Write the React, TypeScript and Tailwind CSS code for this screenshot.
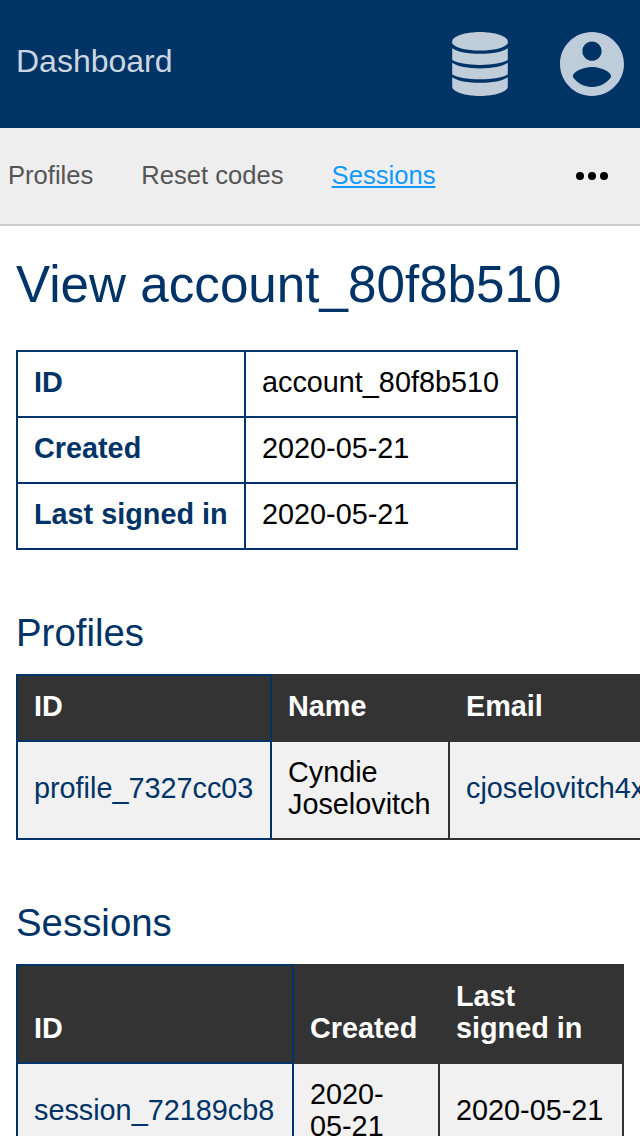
import type { ReactNode } from 'react';

function DatabaseIcon() {
  return (
    <svg viewBox="0 0 64 64" className="h-16 w-16" fill="currentColor" aria-hidden="true">
      <path d="M4.2 9.5C4.2 4.2 17 0 32 0s27.8 4.200 27.800 9.500V11.500C56.500 16 45.500 18.600 32 18.600S7.500 16 4.200 11.500Z" />
      <path d="M4.200 16.200C9.500 19.900 20 21.800 32 21.800s22.500-1.900 27.800-5.600V27.800C55.500 31 44.500 32.900 32 32.900S8.500 31 4.200 27.800Z" />
      <path d="M4.200 30.800C9.500 34.500 20 36.400 32 36.400s22.500-1.900 27.800-5.600V42.200C55.500 45.400 44.500 47.300 32 47.300S8.500 45.400 4.200 42.200Z" />
      <path d="M4.200 45.200C9.500 48.900 20 50.800 32 50.800s22.500-1.900 27.800-5.600V54.500C59.800 59.800 47 64 32 64S4.200 59.800 4.200 54.500Z" />
    </svg>
  );
}

function AccountIcon() {
  return (
    <svg viewBox="2 2 20 20" className="h-16 w-16" fill="currentColor" aria-hidden="true">
      <path d="M12 2C6.48 2 2 6.48 2 12s4.48 10 10 10 10-4.48 10-10S17.52 2 12 2zm0 3c1.66 0 3 1.34 3 3s-1.34 3-3 3-3-1.34-3-3 1.34-3 3-3zm0 14.2c-2.5 0-4.71-1.28-6-3.22.03-1.99 4-3.08 6-3.08 1.99 0 5.97 1.09 6 3.08-1.29 1.94-3.5 3.22-6 3.22z" />
    </svg>
  );
}

function MoreIcon() {
  return (
    <svg viewBox="0 0 32 8" className="h-2 w-8" fill="currentColor" aria-hidden="true">
      <circle cx="4" cy="4" r="4" />
      <circle cx="16" cy="4" r="4" />
      <circle cx="28" cy="4" r="4" />
    </svg>
  );
}

function HeadCell({ children, first = false }: { children: ReactNode; first?: boolean }) {
  return (
    <th
      className={
        first
          ? 'border-2 border-[#003366] bg-[#333333] px-4 pt-[14px] pb-[18px] text-left align-bottom font-bold text-white'
          : 'border-2 border-[#333333] bg-[#333333] px-4 pt-[14px] pb-[18px] text-left align-bottom font-bold text-white'
      }
    >
      {children}
    </th>
  );
}

function Cell({ children, first = false }: { children: ReactNode; first?: boolean }) {
  return (
    <td
      className={
        first
          ? 'border-2 border-[#003366] bg-[#f1f1f1] px-4 pt-[14px] pb-[18px] align-middle'
          : 'border-2 border-[#333333] bg-[#f1f1f1] px-4 pt-[14px] pb-[18px] align-middle'
      }
    >
      {children}
    </td>
  );
}

const details = [
  ['ID', 'account_80f8b510'],
  ['Created', '2020-05-21'],
  ['Last signed in', '2020-05-21'],
];

export default function App() {
  return (
    <div className="h-[1136px] w-[640px] overflow-hidden bg-white font-['Liberation_Sans',Arial,sans-serif] text-[28.8px] leading-8 text-black">
      <header className="flex h-32 items-center justify-between bg-[#003366] px-4 text-[#bfccd9]">
        <span className="pb-1.5 text-[32px] leading-9 text-[#ccd6e0]">Dashboard</span>
        <div className="flex gap-12">
          <DatabaseIcon />
          <AccountIcon />
        </div>
      </header>

      <nav className="flex h-[98px] items-center justify-between border-b-2 border-[#cccccc] bg-[#eeeeee] pr-8 pl-2 text-[25.6px]">
        <div className="flex gap-12 pb-0.5 text-[#555555]">
          <a>Profiles</a>
          <a>Reset codes</a>
          <a className="text-[#1199ff] underline decoration-2 underline-offset-2">Sessions</a>
        </div>
        <MoreIcon />
      </nav>

      <main className="px-4 pt-[29px]">
        <h1 className="text-[51.2px] leading-[60px] text-[#003366]">View account_80f8b510</h1>

        <table className="mt-[35px] w-[502px] table-fixed border-collapse">
          <colgroup>
            <col className="w-[228px]" />
            <col className="w-[272px]" />
          </colgroup>
          <tbody>
            {details.map(([label, value]) => (
              <tr key={label}>
                <th className="border-2 border-[#003366] px-4 pt-[14px] pb-[18px] text-left font-bold whitespace-nowrap text-[#003366]">{label}</th>
                <td className="border-2 border-[#003366] px-4 pt-[14px] pb-[18px]">{value}</td>
              </tr>
            ))}
          </tbody>
        </table>

        <h2 className="mt-[61px] text-[38.4px] leading-[44px] text-[#003366]">Profiles</h2>
        <div className="mt-[19px] -mr-4 overflow-hidden">
          <table className="w-[834px] table-fixed border-collapse">
            <colgroup>
              <col className="w-[254px]" />
              <col className="w-[178px]" />
              <col className="w-[400px]" />
            </colgroup>
            <thead>
              <tr>
                <HeadCell first>ID</HeadCell>
                <HeadCell>Name</HeadCell>
                <HeadCell>Email</HeadCell>
              </tr>
            </thead>
            <tbody>
              <tr>
                <Cell first><a className="text-[#003366]">profile_7327cc03</a></Cell>
                <Cell>Cyndie Joselovitch</Cell>
                <Cell><a className="text-[#003366]">cjoselovitch4x</a></Cell>
              </tr>
            </tbody>
          </table>
        </div>

        <h2 className="mt-[61px] text-[38.4px] leading-[44px] text-[#003366]">Sessions</h2>
        <table className="mt-[19px] w-[608px] table-fixed border-collapse">
          <colgroup>
            <col className="w-[276px]" />
            <col className="w-[146px]" />
            <col className="w-[184px]" />
          </colgroup>
          <thead>
            <tr>
              <HeadCell first>ID</HeadCell>
              <HeadCell>Created</HeadCell>
              <HeadCell>Last<br />signed in</HeadCell>
            </tr>
          </thead>
          <tbody>
            <tr>
              <Cell first><a className="text-[#003366]">session_72189cb8</a></Cell>
              <Cell>2020-<br />05-21</Cell>
              <Cell><span className="whitespace-nowrap">2020-05-21</span></Cell>
            </tr>
          </tbody>
        </table>
      </main>
    </div>
  );
}
